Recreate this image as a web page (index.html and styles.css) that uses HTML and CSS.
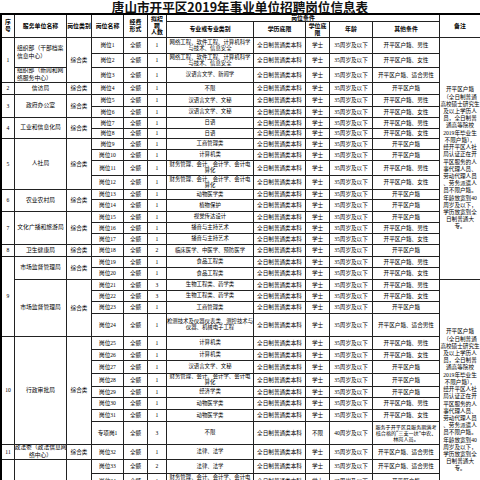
FILE: index.html
```html
<!DOCTYPE html>
<html lang="zh-CN">
<head>
<meta charset="utf-8">
<title>唐山市开平区2019年事业单位招聘岗位信息表</title>
<link rel="stylesheet" href="styles.css">
</head>
<body>
<h1 class="title">唐山市开平区2019年事业单位招聘岗位信息表</h1>
<div class="sheet">
  <div class="c h r2">序<br>号</div>
  <div class="c h r2">服务单位名称</div>
  <div class="c h r2">岗位类别</div>
  <div class="c h r2">岗位名称</div>
  <div class="c h r2">经费<br>形式</div>
  <div class="c h r2">拟招<br>聘<br>人数</div>
  <div class="c h s5 top">岗位条件</div>
  <div class="c h r2">备注</div>
  <div class="c h">专业或专业类别</div>
  <div class="c h">学历底限</div>
  <div class="c h">学位底<br>限</div>
  <div class="c h">年龄</div>
  <div class="c h">其他条件</div>

  <div class="c r3">1</div><div class="c r2 u l">组织部（干部档案<br>信息中心）</div><div class="c r3">综合类</div>
  <div class="c">岗位1</div><div class="c">全额</div><div class="c">1</div><div class="c m">网络工程、软件工程、计算机科学<br>与技术、信息安全</div><div class="c">全日制普通类本科</div><div class="c">学士</div><div class="c">35周岁及以下</div><div class="c">开平区户籍、男性</div>
  <div class="c r20 note">开平区户籍<br>（全日制普通<br>高校硕士研究生<br>及以上学历人<br>员，全日制普<br>通高等院校<br>2019年毕业生<br>不限户籍），<br>经开平区人社<br>局认证正在开<br>平区服务的人<br>事代理人员、<br>劳动代理人员<br>、劳务派遣人<br>员不限户籍。<br>年龄放宽到40<br>周岁及以下，<br>学历放宽到全<br>日制普通大<br>专。</div>

  <div class="c">岗位2</div><div class="c">全额</div><div class="c">1</div><div class="c m">网络工程、软件工程、计算机科学<br>与技术、信息安全</div><div class="c">全日制普通类本科</div><div class="c">学士</div><div class="c">35周岁及以下</div><div class="c">开平区户籍、女性</div>

  <div class="c u l">组织部（新闻和网<br>络服务中心）</div>
  <div class="c">岗位3</div><div class="c">全额</div><div class="c">1</div><div class="c m">汉语言文学、新闻学</div><div class="c">全日制普通类本科</div><div class="c">学士</div><div class="c">35周岁及以下</div><div class="c">开平区户籍、适合男性</div>

  <div class="c">2</div><div class="c u">信访局</div><div class="c">综合类</div>
  <div class="c">岗位4</div><div class="c">全额</div><div class="c">1</div><div class="c m">不限</div><div class="c">全日制普通类本科</div><div class="c">学士</div><div class="c">35周岁及以下</div><div class="c">开平区户籍</div>

  <div class="c r2">3</div><div class="c r2 u">政府办公室</div><div class="c r2">综合类</div>
  <div class="c">岗位5</div><div class="c">全额</div><div class="c">1</div><div class="c m">汉语言文学、文秘</div><div class="c">全日制普通类本科</div><div class="c">学士</div><div class="c">35周岁及以下</div><div class="c">开平区户籍、男性</div>
  <div class="c">岗位6</div><div class="c">全额</div><div class="c">1</div><div class="c m">汉语言文学、文秘</div><div class="c">全日制普通类本科</div><div class="c">学士</div><div class="c">35周岁及以下</div><div class="c">开平区户籍、女性</div>

  <div class="c r2">4</div><div class="c r2 u">工业和信息化局</div><div class="c r2">综合类</div>
  <div class="c">岗位7</div><div class="c">全额</div><div class="c">1</div><div class="c m">日语</div><div class="c">全日制普通类本科</div><div class="c">学士</div><div class="c">35周岁及以下</div><div class="c">开平区户籍、男性</div>
  <div class="c">岗位8</div><div class="c">全额</div><div class="c">1</div><div class="c m">日语</div><div class="c">全日制普通类本科</div><div class="c">学士</div><div class="c">35周岁及以下</div><div class="c">开平区户籍、女性</div>

  <div class="c r4">5</div><div class="c r4 u">人社局</div><div class="c r4">综合类</div>
  <div class="c">岗位9</div><div class="c">全额</div><div class="c">1</div><div class="c m">工商管理类</div><div class="c">全日制普通类本科</div><div class="c">学士</div><div class="c">35周岁及以下</div><div class="c">开平区户籍</div>
  <div class="c">岗位10</div><div class="c">全额</div><div class="c">1</div><div class="c m">计算机类</div><div class="c">全日制普通类本科</div><div class="c">学士</div><div class="c">35周岁及以下</div><div class="c">开平区户籍</div>
  <div class="c">岗位11</div><div class="c">全额</div><div class="c">1</div><div class="c m">财务管理、会计、会计学、会计电<br>算化</div><div class="c">全日制普通类本科</div><div class="c">学士</div><div class="c">35周岁及以下</div><div class="c">开平区户籍、男性</div>
  <div class="c">岗位12</div><div class="c">全额</div><div class="c">1</div><div class="c m">财务管理、会计、会计学、会计电<br>算化</div><div class="c">全日制普通类本科</div><div class="c">学士</div><div class="c">35周岁及以下</div><div class="c">开平区户籍、女性</div>

  <div class="c r2">6</div><div class="c r2 u">农业农村局</div><div class="c r2">综合类</div>
  <div class="c">岗位13</div><div class="c">全额</div><div class="c">1</div><div class="c m">动物医学类</div><div class="c">全日制普通类本科</div><div class="c">学士</div><div class="c">35周岁及以下</div><div class="c">开平区户籍</div>
  <div class="c">岗位14</div><div class="c">全额</div><div class="c">1</div><div class="c m">植物保护</div><div class="c">全日制普通类本科</div><div class="c">学士</div><div class="c">35周岁及以下</div><div class="c">开平区户籍</div>

  <div class="c r3">7</div><div class="c r3 u">文化广播和旅游局</div><div class="c r3">综合类</div>
  <div class="c">岗位15</div><div class="c">全额</div><div class="c">1</div><div class="c m">视觉传达设计</div><div class="c">全日制普通类本科</div><div class="c">学士</div><div class="c">35周岁及以下</div><div class="c">开平区户籍</div>
  <div class="c">岗位16</div><div class="c">全额</div><div class="c">1</div><div class="c m">播音与主持艺术</div><div class="c">全日制普通类本科</div><div class="c">学士</div><div class="c">35周岁及以下</div><div class="c">开平区户籍、男性</div>
  <div class="c">岗位17</div><div class="c">全额</div><div class="c">1</div><div class="c m">播音与主持艺术</div><div class="c">全日制普通类本科</div><div class="c">学士</div><div class="c">35周岁及以下</div><div class="c">开平区户籍、女性</div>

  <div class="c">8</div><div class="c u">卫生健康局</div><div class="c">综合类</div>
  <div class="c">岗位18</div><div class="c">全额</div><div class="c">2</div><div class="c m">临床医学、中医学、预防医学</div><div class="c">全日制普通类本科</div><div class="c">学士</div><div class="c">35周岁及以下</div><div class="c">开平区户籍</div>

  <div class="c r6">9</div><div class="c r2 u">市场监督管理局</div><div class="c r2">综合类</div>
  <div class="c">岗位19</div><div class="c">全额</div><div class="c">1</div><div class="c m">食品工程类</div><div class="c">全日制普通类本科</div><div class="c">学士</div><div class="c">35周岁及以下</div><div class="c">开平区户籍、男性</div>
  <div class="c">岗位20</div><div class="c">全额</div><div class="c">1</div><div class="c m">食品工程类</div><div class="c">全日制普通类本科</div><div class="c">学士</div><div class="c">35周岁及以下</div><div class="c">开平区户籍、女性</div>

  <div class="c r4 u">市场监督管理局</div><div class="c r4">综合类</div>
  <div class="c">岗位21</div><div class="c">全额</div><div class="c">3</div><div class="c m">生物工程类、药学类</div><div class="c">全日制普通类本科</div><div class="c">学士</div><div class="c">35周岁及以下</div><div class="c">开平区户籍、男性</div>
  <div class="c r17 note">开平区户籍<br>（全日制普通<br>高校硕士研究生<br>及以上学历人<br>员，全日制普<br>通高等院校<br>2019年毕业生<br>不限户籍），<br>经开平区人社<br>局认证正在开<br>平区服务的人<br>事代理人员、<br>劳动代理人员<br>、劳务派遣人<br>员不限户籍。<br>年龄放宽到40<br>周岁及以下，<br>学历放宽到全<br>日制普通大<br>专。</div>
  <div class="c">岗位22</div><div class="c">全额</div><div class="c">3</div><div class="c m">生物工程类、药学类</div><div class="c">全日制普通类本科</div><div class="c">学士</div><div class="c">35周岁及以下</div><div class="c">开平区户籍、女性</div>
  <div class="c">岗位23</div><div class="c">全额</div><div class="c">1</div><div class="c m">工商管理类</div><div class="c">全日制普通类本科</div><div class="c">学士</div><div class="c">35周岁及以下</div><div class="c">开平区户籍</div>
  <div class="c">岗位24</div><div class="c">全额</div><div class="c">1</div><div class="c m">检测技术及仪器仪表类、测控技术与<br>仪器、机械电子工程</div><div class="c">全日制普通类本科</div><div class="c">学士</div><div class="c">35周岁及以下</div><div class="c">开平区户籍、适合男性</div>

  <div class="c r8">10</div><div class="c r8 u">行政审批局</div><div class="c r8">综合类</div>
  <div class="c">岗位25</div><div class="c">全额</div><div class="c">1</div><div class="c m">计算机类</div><div class="c">全日制普通类本科</div><div class="c">学士</div><div class="c">35周岁及以下</div><div class="c">开平区户籍、男性</div>
  <div class="c">岗位26</div><div class="c">全额</div><div class="c">1</div><div class="c m">计算机类</div><div class="c">全日制普通类本科</div><div class="c">学士</div><div class="c">35周岁及以下</div><div class="c">开平区户籍、女性</div>
  <div class="c">岗位27</div><div class="c">全额</div><div class="c">1</div><div class="c m">汉语言文学、文秘</div><div class="c">全日制普通类本科</div><div class="c">学士</div><div class="c">35周岁及以下</div><div class="c">开平区户籍</div>
  <div class="c">岗位28</div><div class="c">全额</div><div class="c">1</div><div class="c m">财务管理、会计、会计学、会计电<br>算化</div><div class="c">全日制普通类本科</div><div class="c">学士</div><div class="c">35周岁及以下</div><div class="c">开平区户籍</div>
  <div class="c">岗位29</div><div class="c">全额</div><div class="c">1</div><div class="c m">经济学类</div><div class="c">全日制普通类本科</div><div class="c">学士</div><div class="c">35周岁及以下</div><div class="c">开平区户籍</div>
  <div class="c">岗位30</div><div class="c">全额</div><div class="c">1</div><div class="c m">动物医学类</div><div class="c">全日制普通类本科</div><div class="c">学士</div><div class="c">35周岁及以下</div><div class="c">开平区户籍、男性</div>
  <div class="c">岗位31</div><div class="c">全额</div><div class="c">1</div><div class="c m">动物医学类</div><div class="c">全日制普通类本科</div><div class="c">学士</div><div class="c">35周岁及以下</div><div class="c">开平区户籍、女性</div>
  <div class="c">专项岗1</div><div class="c">全额</div><div class="c">3</div><div class="c m">不限</div><div class="c">全日制普通类本科</div><div class="c">不限</div><div class="c">40周岁及以下</div><div class="c small">服务于开平区且服务期满考<br>核合格的“三支一扶”中农、<br>林岗人员。</div>

  <div class="c">11</div><div class="c u">政法委（政法信息网<br>络中心）</div><div class="c">综合类</div>
  <div class="c">岗位32</div><div class="c">全额</div><div class="c">1</div><div class="c m">法律、法学</div><div class="c">全日制普通类本科</div><div class="c">学士</div><div class="c">35周岁及以下</div><div class="c">开平区户籍、适合男性</div>

  <div class="c r4">12</div><div class="c r4 u">司法局</div><div class="c r4">综合类</div>
  <div class="c">岗位33</div><div class="c">全额</div><div class="c">2</div><div class="c m">法律、法学</div><div class="c">全日制普通类本科</div><div class="c">学士</div><div class="c">35周岁及以下</div><div class="c">开平区户籍、适合男性</div>
  <div class="c">岗位34</div><div class="c">全额</div><div class="c">1</div><div class="c m">财务管理、会计、会计学、会计电<br>算化</div><div class="c">全日制普通类本科</div><div class="c">学士</div><div class="c">35周岁及以下</div><div class="c">开平区户籍</div>
  <div class="c">岗位35</div><div class="c">全额</div><div class="c">1</div><div class="c m">汉语言文学、文秘</div><div class="c">全日制普通类本科</div><div class="c">学士</div><div class="c">35周岁及以下</div><div class="c">开平区户籍</div>
  <div class="c">岗位36</div><div class="c">全额</div><div class="c">1</div><div class="c m">不限</div><div class="c">全日制普通类本科</div><div class="c">学士</div><div class="c">35周岁及以下</div><div class="c">开平区户籍</div>
</div>
</body>
</html>
```

FILE: styles.css
```css
html, body {
  margin: 0;
  padding: 0;
  background: #fff;
}
body {
  width: 480px;
  height: 480px;
  overflow: hidden;
  font-family: "Liberation Serif", "Noto Sans CJK SC", serif;
  color: #000;
}
.title {
  margin: 0;
  height: 13px;
  font-family: "Noto Sans CJK SC", sans-serif;
  font-size: 12.6px;
  line-height: 13px;
  font-weight: 700;
  text-align: center;
  white-space: nowrap;
  color: #111;
}
.sheet {
  display: grid;
  width: 481px;
  box-sizing: border-box;
  border-left: 2px solid #000;
  border-top: 2px solid #000;
  grid-template-columns: 13px 52px 25px 32px 24px 19px 87px 52px 24px 43px 67px 41px;
  grid-template-rows:
    7px 16px
    16px 14px 15px 12px 12px 11px 11px 10px 11px 11px
    15px 14px 10px 12px 11px 11px 11px 12px 11px 12px
    11px 11px 12px 23px 13px 11px 13px 13px 11px 12px
    12px 23px 15px 14px 15px 15px 18px;
  font-size: 5.6px;
  line-height: 6.4px;
}
.c {
  display: flex;
  align-items: center;
  justify-content: center;
  text-align: center;
  white-space: nowrap;
  overflow: hidden;
  min-width: 0;
  min-height: 0;
  border-right: 1px solid #222;
  border-bottom: 1px solid #222;
}
.h {
  font-family: "Noto Sans CJK SC", sans-serif;
  font-weight: 700;
  font-size: 5.9px;
  line-height: 6.6px;
  color: #000;
}
.top {
  line-height: 6px;
}
.u {
  font-size: 5.8px;
  line-height: 7.6px;
}
.l {
  justify-content: flex-start;
  text-align: left;
  padding-left: 2px;
}
.m {
  font-size: 5.4px;
  line-height: 5.8px;
}
.note {
  font-size: 5.6px;
  line-height: 7.2px;
}
.small {
  font-size: 5.1px;
  line-height: 6px;
}
.r2 { grid-row: span 2; }
.r3 { grid-row: span 3; }
.r4 { grid-row: span 4; }
.r6 { grid-row: span 6; }
.r8 { grid-row: span 8; }
.r17 { grid-row: span 17; }
.r20 { grid-row: span 20; }
.s5 { grid-column: span 5; }
```
